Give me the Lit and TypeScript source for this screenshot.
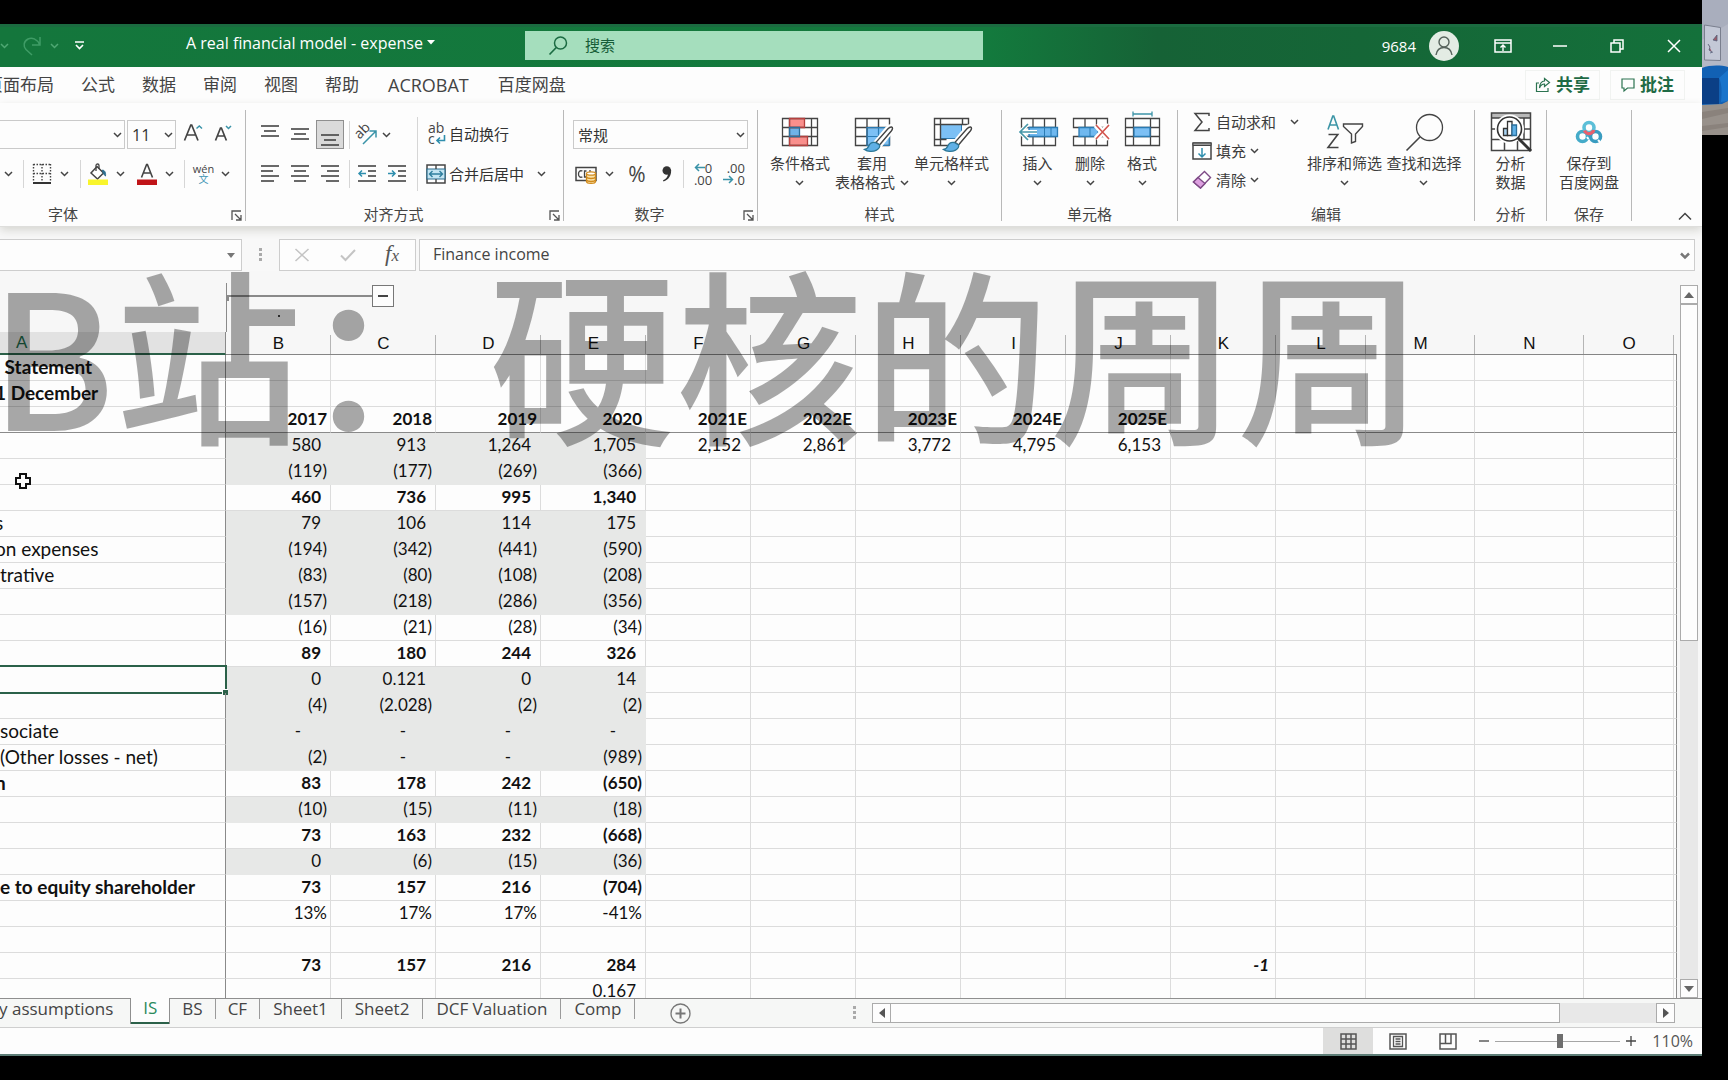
import { LitElement, html, svg, css, nothing, TemplateResult, SVGTemplateResult } from "lit";
import { customElement, state } from "lit/decorators.js";
import { classMap } from "lit/directives/class-map.js";

type Row = { label?: string; cut?: boolean; bold?: boolean; fill?: boolean; rule?: boolean; cells?: string[] };

const COLUMNS = ["A", "B", "C", "D", "E", "F", "G", "H", "I", "J", "K", "L", "M", "N", "O"];

const ROWS: Row[] = [
  { label: " Statement", bold: true },
  { label: "1 December", cut: true, bold: true },
  { bold: true, rule: true, cells: ["2017", "2018", "2019", "2020", "2021E", "2022E", "2023E", "2024E", "2025E"] },
  { fill: true, cells: ["580", "913", "1,264", "1,705", "2,152", "2,861", "3,772", "4,795", "6,153"] },
  { fill: true, cells: ["(119)", "(177)", "(269)", "(366)"] },
  { bold: true, cells: ["460", "736", "995", "1,340"] },
  { label: "s", cut: true, fill: true, cells: ["79", "106", "114", "175"] },
  { label: "on expenses", cut: true, fill: true, cells: ["(194)", "(342)", "(441)", "(590)"] },
  { label: "trative", fill: true, cells: ["(83)", "(80)", "(108)", "(208)"] },
  { fill: true, cells: ["(157)", "(218)", "(286)", "(356)"] },
  { cells: ["(16)", "(21)", "(28)", "(34)"] },
  { bold: true, cells: ["89", "180", "244", "326"] },
  { fill: true, cells: ["0", "0.121", "0", "14"] },
  { fill: true, cells: ["(4)", "(2.028)", "(2)", "(2)"] },
  { label: "sociate", fill: true, cells: ["-", "-", "-", "-"] },
  { label: "(Other losses - net)", fill: true, cells: ["(2)", "-", "-", "(989)"] },
  { label: "n", cut: true, bold: true, cells: ["83", "178", "242", "(650)"] },
  { fill: true, cells: ["(10)", "(15)", "(11)", "(18)"] },
  { bold: true, cells: ["73", "163", "232", "(668)"] },
  { fill: true, cells: ["0", "(6)", "(15)", "(36)"] },
  { label: "e to equity shareholder", bold: true, cells: ["73", "157", "216", "(704)"] },
  { cells: ["13%", "17%", "17%", "-41%"] },
  {},
  { bold: true, cells: ["73", "157", "216", "284", "", "", "", "", "", "-1"] },
  { cells: ["", "", "", "0.167"] },
];

const SELECTED_ROW = 12;

const icon = (w: number, h: number, body: SVGTemplateResult) =>
  html`<svg class="ic" width=${w} height=${h} viewBox="0 0 ${w} ${h}" fill="none" aria-hidden="true">${body}</svg>`;

const chev = () => icon(9, 6, svg`<path d="M1 1l3.5 3.5L8 1" stroke="#444" stroke-width="1.5"/>`);

const lines = (rows: [number, number, number][]) =>
  svg`${rows.map(([x1, x2, y]) => svg`<path d="M${x1} ${y}H${x2}" stroke="#444" stroke-width="1.6"/>`)}`;

const brush = svg`
  <path d="M41 16c2 0 2.500 2 1 4.500L30 36l-4.500-3.500L37 18.500c1.400-1.600 2.700-2.500 4-2.500z" fill="#fff" stroke="#fff" stroke-width="4"/>
  <path d="M41.500 17c1.500.3 1.300 2-.2 4L29.500 35l-3.500-2.700L38 18.800c1.200-1.300 2.400-2 3.500-1.800z" fill="#fff" stroke="#444" stroke-width="1.400"/>
  <path d="M25.500 32.500c-3-.6-5.600.6-6.600 3.200-.7 2-2.100 3.300-4.400 3.800 3 2.200 8.500 2.600 12 .6 2.400-1.400 3.600-3.500 3-5.100z" fill="#5fb0e6" stroke="#2c7796" stroke-width="1.300"/>`;

const ICONS = {
  conditional: svg`
    <path d="M4.500 8.500h35v27h-35z" fill="#fff"/>
    <path d="M11.500 8.500h15v9h-15zM11.500 26.500h18v9h-18z" fill="#f98f8c"/>
    <path d="M11.500 17.500h10v9h-10z" fill="#6fb3e8"/>
    <path d="M4.500 8.500h35v27h-35zM4.500 17.500h35M4.500 26.500h35M11.500 8.500v27M33.500 8.500v27" stroke="#444" stroke-width="1.300"/>
    <path d="M11.500 8.500h15v9h-15zM11.500 26.500h18v9h-18z" stroke="#b5403e" stroke-width="1.300"/>
    <path d="M11.500 17.500h10v9h-10z" stroke="#2b6f9c" stroke-width="1.300"/>`,
  tableFormat: svg`
    <path d="M5.500 8.500h34v27h-34z" fill="#fff"/>
    <path d="M17 17.500h22.500v18H17z" fill="#7cc0f5"/>
    <path d="M39.500 35.500h-34v-27h34v27M5.500 17.500h34M5.500 26.500H17M17 8.500v27M28.500 8.500v9" stroke="#444" stroke-width="1.400"/>
    <path d="M17 26.500h22.500M28.500 17.500v18M17 17.500h22.500v18H17z" stroke="#2b7bb3" stroke-width="1.200"/>
    ${brush}`,
  cellStyle: svg`
    <path d="M5.500 8.500h34v27h-34z" fill="#fff"/>
    <path d="M11.500 14.500h21v14h-21z" fill="#7cc0f5" stroke="#2b7bb3"/>
    <path d="M39.500 16V8.500h-34v27H20M11.500 8.500v27M5.500 14.500h34M5.500 29.500h12M33.500 8.500v6" stroke="#444" stroke-width="1.400"/>
    ${brush}`,
  insert: svg`
    <path d="M5.500 8.500h34v9h-34zM5.500 26.500h34v9h-34zM17 8.500v9M28.500 8.500v9M17 26.500v9M28.500 26.500v9M5.500 17.500v9" fill="#fff" stroke="#444" stroke-width="1.300"/>
    <path d="M13 17.500h28.500v9H13z" fill="#6fb8ef" stroke="#2b7bb3" stroke-width="1.300"/>
    <path d="M28.500 17.500v9M35 17.500v9" stroke="#2b7bb3"/>
    <path d="M21 22H4M12 14l-8 8 8 8" stroke="#fff" stroke-width="4"/>
    <path d="M21 22H4M12 14l-8 8 8 8" stroke="#4797a8" stroke-width="1.700"/>`,
  remove: svg`
    <path d="M5.500 8.500h34v9h-34zM5.500 26.500h34v9h-34zM17 8.500v9M28.500 8.500v9M17 26.500v9M28.500 26.500v9" fill="#fff" stroke="#444" stroke-width="1.300"/>
    <path d="M11 17.500h19v9H11z" fill="#6fb8ef" stroke="#2b7bb3" stroke-width="1.300"/>
    <path d="M22 17.500v9" stroke="#2b7bb3"/>
    <path d="M28 15l13 14M41 15L28 29" stroke="#fff" stroke-width="6"/>
    <path d="M28 15l13 14M41 15L28 29" stroke="#d2544d" stroke-width="1.600"/>`,
  format: svg`
    <path d="M5.500 8.500h34v27h-34zM5.500 17.500h34M5.500 26.500h34M13.500 8.500v27M30.500 8.500v27" fill="#fff" stroke="#444" stroke-width="1.300"/>
    <path d="M14 17.500h16v9H14z" fill="#7cc0f5" stroke="#2b7bb3" stroke-width="1.300"/>
    <path d="M13 4h19M13 1.500v5M32 1.500v5" stroke="#3d94a8" stroke-width="1.300"/>`,
  sort: svg`
    <path d="M5 19.500L9.800 6h.9l4.800 13.500M6.800 15h7" stroke="#3c95a6" stroke-width="1.600"/>
    <path d="M5.500 24.500h9.300L5 37.500h10.500" stroke="#444" stroke-width="1.600"/>
    <path d="M20.500 14h19v2.500L32.500 24v7.500l-4 1.500v-9L20.500 16.500z" stroke="#444" stroke-width="1.400"/>`,
  find: svg`<circle cx="27.500" cy="17.500" r="13" stroke="#444" stroke-width="1.300"/><path d="M18 27L4.500 40.500" stroke="#444" stroke-width="1.600"/>`,
  analyze: svg`
    <path d="M2.500 3h39v37.500h-39z" fill="#fff"/><path d="M2.500 3h39v5h-39z" fill="#b9b9b9"/>
    <path d="M2.500 3h39v37.500h-39zM2.500 8h39M2.500 19h39M2.500 29.500h39M15.500 29v11.500M28.500 29v11.500M35 8v21" stroke="#444" stroke-width="1.500"/>
    <circle cx="20.500" cy="19" r="13" fill="#fff" stroke="#fff" stroke-width="3"/>
    <circle cx="20.500" cy="19" r="12" fill="#fff" stroke="#333" stroke-width="1.600"/>
    <path d="M14.500 18.500h4v7h-4z" fill="#a8d3f2" stroke="#333" stroke-width="1.300"/>
    <path d="M18.500 11.500h4.500v14h-4.500z" fill="#fff" stroke="#333" stroke-width="1.300"/>
    <path d="M23 15h4.500v10.500H23z" fill="#5fb0e6" stroke="#2b6f9c" stroke-width="1.300"/>
    <path d="M29 28l13 13" stroke="#333" stroke-width="3"/>`,
  cloud: svg`
    <circle cx="15.500" cy="26.500" r="5" stroke="#45abc9" stroke-width="3.600"/>
    <circle cx="28.500" cy="26.500" r="5" stroke="#3a9cc0" stroke-width="3.600"/>
    <circle cx="22" cy="17.500" r="5" stroke="#5cbfd8" stroke-width="3.600"/>
    <path d="M17.500 20.500c1 2.700 4 3.700 6.300 2.700 1.700-.7 2.700-1.600 3-3.200" stroke="#e8606c" stroke-width="3.400"/>
    <path d="M20 27l1.500 2M31 30l2 2" stroke="#fff" stroke-width="2"/>`,
};

@customElement("app-root")
export class AppRoot extends LitElement {
  @state() private sheet = "IS";

  private big(body: SVGTemplateResult, first: string, second?: string, drop = true): TemplateResult {
    return html`<button class="big">
      ${icon(44, 44, body)}
      <span>${first}</span>
      <span class="second">${second ?? nothing}${drop ? chev() : nothing}</span>
    </button>`;
  }

  private caption(text: string, launcher = false) {
    return html`<div class="caption">
      <span>${text}</span>
      ${launcher
        ? html`<button class="launch" aria-label=${text}>
            ${icon(11, 11, svg`<path d="M1 10V1h9M4 4l5.500 5.500M10 5v5H5" stroke="#555" stroke-width="1.300"/>`)}
          </button>`
        : nothing}
    </div>`;
  }

  private titleBar() {
    return html`<header class="title-bar">
      <div class="title-left">
        <button aria-label="撤消选项">${icon(9, 6, svg`<path d="M1 1l3.500 3.500L8 1" stroke="#4fa873" stroke-width="1.500"/>`)}</button>
        <button class="redo" aria-label="恢复">
          ${icon(20, 20, svg`<path d="M18 1v8h-8M17.500 8.500C15 3 10 1 6 3 1.500 5.500 1 10 4 13.500L10 19" stroke="#3f9c66" stroke-width="1.500"/>`)}
        </button>
        <button aria-label="恢复选项">${icon(9, 6, svg`<path d="M1 1l3.500 3.500L8 1" stroke="#4fa873" stroke-width="1.500"/>`)}</button>
        <button class="customize" aria-label="自定义">
          ${icon(9, 9, svg`<path d="M0 1h9" stroke="#fff" stroke-width="1.500"/><path d="M1 4l3.500 3.500L8 4" stroke="#fff" stroke-width="1.600"/>`)}
        </button>
        <button class="file-name">A real financial model - expense ${icon(8, 5, svg`<path d="M0 0h8L4 4.500z" fill="#fff"/>`)}</button>
      </div>
      <label class="search">
        ${icon(20, 20, svg`<circle cx="12.500" cy="7" r="6" stroke="#1b6b42" stroke-width="1.500"/><path d="M8.300 11.500L1.500 18.500" stroke="#1b6b42" stroke-width="1.700"/>`)}
        <input type="text" placeholder="搜索" aria-label="搜索" />
      </label>
      <div class="title-right">
        <span>9684</span>
        <button class="avatar" aria-label="9684">
          ${icon(30, 30, svg`<circle cx="15" cy="15" r="15" fill="#e3ece4"/><circle cx="15" cy="11" r="5" stroke="#55625b" stroke-width="1.400"/><path d="M7 24c.8-5 4-7.500 8-7.500s7.200 2.500 8 7.500" stroke="#55625b" stroke-width="1.400"/>`)}
        </button>
        <button class="win" aria-label="功能区显示选项">
          ${icon(18, 14, svg`<path d="M1 1h16v12H1zM1 4h16" stroke="#fff" stroke-width="1.500"/><path d="M9 12V6M6.500 8.500L9 6l2.500 2.500" stroke="#fff" stroke-width="1.400"/>`)}
        </button>
        <button class="win" aria-label="最小化">${icon(14, 2, svg`<path d="M0 1h14" stroke="#fff" stroke-width="1.500"/>`)}</button>
        <button class="win" aria-label="还原">
          ${icon(14, 14, svg`<path d="M1 4h9v9H1zM4 4V1h9v9h-3" stroke="#fff" stroke-width="1.500"/>`)}
        </button>
        <button class="win" aria-label="关闭">${icon(14, 14, svg`<path d="M1 1l12 12M13 1L1 13" stroke="#fff" stroke-width="1.500"/>`)}</button>
      </div>
    </header>`;
  }

  private tabs() {
    const names = ["页面布局", "公式", "数据", "审阅", "视图", "帮助", "ACROBAT", "百度网盘"];
    return html`<nav class="tabs">
      ${names.map((n) => html`<button class=${classMap({ latin: /^[A-Z]+$/.test(n) })}>${n}</button>`)}
      <div class="tab-actions">
        <button>
          ${icon(16, 16, svg`<path d="M4 6H1.500v8.500H13V11" stroke="#2b7350" stroke-width="1.200"/><path d="M9.500 1.500l5 4-5 4V7C7 7 5.500 8.500 4.500 11c0-4 2-7 5-7z" stroke="#2b7350" stroke-width="1.200"/>`)}
          共享
        </button>
        <button>${icon(14, 14, svg`<path d="M1 1h12v9H6.500L3 13v-3H1z" stroke="#2b7350" stroke-width="1.200"/>`)}批注</button>
      </div>
    </nav>`;
  }

  private fontGroup() {
    return html`<section class="group font-group">
      <div class="row font-top">
        <label class="combo face"><select aria-label="字体"><option></option></select>${chev()}</label>
        <label class="combo size"><select aria-label="字号"><option>11</option></select>${chev()}</label>
        <button aria-label="增大字号">
          ${icon(20, 20, svg`<path d="M1.500 17.500L7.800 2h.9L15 17.500M3.800 12h9" stroke="#444" stroke-width="1.700"/><path d="M13.500 5.500L16.300 3 19 5.500" stroke="#3a93a8" stroke-width="1.500"/>`)}
        </button>
        <button aria-label="减小字号">
          ${icon(20, 20, svg`<path d="M2.500 17.500L7.500 5h.9l5 12.500M4.500 13h7" stroke="#444" stroke-width="1.700"/><path d="M13 3l2.500 2.500L18 3" stroke="#3a93a8" stroke-width="1.500"/>`)}
        </button>
      </div>
      <div class="row font-bottom">
        <button aria-label="下划线选项">${chev()}</button>
        <i class="bar"></i>
        <button aria-label="边框">
          ${icon(20, 22, svg`<path d="M1.500 1.500h17M1.500 10.500h17M1.500 1v18M10 1v18M18.500 1v18" stroke="#444" stroke-width="1.400" stroke-dasharray="1.500 1.500"/><path d="M1 20h18" stroke="#333" stroke-width="2"/>`)}
        </button>
        <button aria-label="边框选项">${chev()}</button>
        <i class="bar"></i>
        <button aria-label="填充颜色">
          ${icon(22, 22, svg`<path d="M10 3.500l6.500 6.500-6 6L4 10z" fill="#fff" stroke="#444" stroke-width="1.500"/><path d="M9 8V2.500c0-2 3-2 3 0V6" stroke="#444" stroke-width="1.300"/><path d="M15.500 7c2 .5 3.500 2 3 6-1.500-1-2-2.500-2.500-3.500z" fill="#2d6f8f" stroke="#2d6f8f"/><path d="M1 16.500h20v5.500H1z" fill="#f9f52c"/>`)}
        </button>
        <button aria-label="填充颜色选项">${chev()}</button>
        <button aria-label="字体颜色">
          ${icon(22, 22, svg`<path d="M5.500 14.500L10.600 1.500h.8l5.100 13M7.300 10h7.400" stroke="#444" stroke-width="1.600"/><path d="M1 16.500h20v5.500H1z" fill="#c01418"/>`)}
        </button>
        <button aria-label="字体颜色选项">${chev()}</button>
        <i class="bar"></i>
        <button class="pinyin"><span>wén</span><span class="han">文</span></button>
        <button aria-label="拼音选项">${chev()}</button>
      </div>
      ${this.caption("字体", true)}
    </section>`;
  }

  private alignGroup() {
    return html`<section class="group align-group">
      <div class="align-split">
        <div class="align-left">
          <div class="row align-row">
            <i></i>
            <button aria-label="顶端对齐">${icon(18, 24, lines([[0, 18, 3], [3, 15, 8], [0, 18, 13]]))}</button>
            <button aria-label="垂直居中">${icon(18, 24, lines([[0, 18, 6], [3, 15, 11], [0, 18, 16]]))}</button>
            <button class="pressed" aria-label="底端对齐">${icon(18, 24, lines([[0, 18, 12], [3, 15, 17], [0, 18, 22]]))}</button>
            <i class="bar"></i>
            <button aria-label="方向">
              <svg class="ic" width="22" height="22" viewBox="0 0 22 22" fill="none" aria-hidden="true">
                <text x="2" y="14" transform="rotate(-45 5 13)" font-size="14" font-family="Open Sans, sans-serif" fill="#444">ab</text>
                <path d="M7 20L20 7M13.500 7H20v6.500" stroke="#3a93a8" stroke-width="1.500" />
              </svg>
            </button>
            <button aria-label="方向选项">${chev()}</button>
          </div>
          <div class="row align-row">
            <i></i>
            <button aria-label="左对齐">${icon(18, 18, lines([[0, 18, 1], [0, 12, 6], [0, 18, 11], [0, 13, 16]]))}</button>
            <button aria-label="居中">${icon(18, 18, lines([[0, 18, 1], [3, 15, 6], [0, 18, 11], [3, 15, 16]]))}</button>
            <button aria-label="右对齐">${icon(18, 18, lines([[0, 18, 1], [6, 18, 6], [0, 18, 11], [5, 18, 16]]))}</button>
            <i class="bar"></i>
            <button aria-label="减少缩进量">
              ${icon(18, 18, svg`${lines([[0, 18, 1], [10, 18, 6], [10, 18, 11], [0, 18, 16]])}<path d="M8 8.500H1M4 5.500l-3 3 3 3" stroke="#2f8fae" stroke-width="1.500"/>`)}
            </button>
            <button class="indent" aria-label="增加缩进量">
              ${icon(18, 18, svg`${lines([[0, 18, 1], [10, 18, 6], [10, 18, 11], [0, 18, 16]])}<path d="M0 8.500h7M4 5.500l3 3-3 3" stroke="#2f8fae" stroke-width="1.500"/>`)}
            </button>
          </div>
        </div>
        <div class="align-right">
          <button class="wide">
            <svg class="ic" width="20" height="24" viewBox="0 0 20 24" fill="none" aria-hidden="true">
              <text x="2" y="11" font-size="14" font-family="Open Sans, sans-serif" fill="#444">ab</text>
              <text x="2" y="22" font-size="14" font-family="Open Sans, sans-serif" fill="#444">c</text>
              <path d="M18.500 13v5.500H11M14 15.500l-3 3 3 3" stroke="#2f8fae" stroke-width="1.600" />
            </svg>
            自动换行
          </button>
          <button class="wide">
            ${icon(20, 20, svg`<path d="M1 1h18v18H1z" fill="#fff" stroke="#444" stroke-width="1.500"/><path d="M1 5h18v10H1z" fill="#c4e5f2" stroke="#2d6f8f" stroke-width="1.200"/><path d="M10 1v4M10 15v4" stroke="#444" stroke-width="1.400"/><path d="M3.500 10h13M6.500 7l-3 3 3 3M13.500 7l3 3-3 3" stroke="#2f7f9e" stroke-width="1.400"/>`)}
            合并后居中 <span class="far">${chev()}</span>
          </button>
        </div>
      </div>
      ${this.caption("对齐方式", true)}
    </section>`;
  }

  private numberGroup() {
    return html`<section class="group number-group">
      <div class="row number-top">
        <label class="combo"><select aria-label="数字格式"><option>常规</option></select>${chev()}</label>
      </div>
      <div class="row number-bottom">
        <i></i>
        <button aria-label="会计数字格式">
          ${icon(22, 20, svg`<path d="M1 3.500h20v13H1z" stroke="#444" stroke-width="1.500"/><path d="M7.500 7C4.500 6 3.500 8 3.500 10s1 4 4 3M11.500 7h-2v6h2M15 6v5" stroke="#444" stroke-width="1.300"/><path d="M11.500 9.500v8c0 2.500 9 2.500 9 0v-8" fill="#fbe3a8" stroke="#d08a1c" stroke-width="1.300"/><ellipse cx="16" cy="9.500" rx="4.500" ry="1.700" fill="#fff" stroke="#d08a1c" stroke-width="1.300"/><path d="M11.500 13c1 2 8 2 9 0M11.500 16c1 2 8 2 9 0" stroke="#d08a1c" stroke-width="1.300"/>`)}
        </button>
        <button aria-label="会计格式选项">${chev()}</button>
        <button class="percent">%</button>
        <button aria-label="千位分隔样式">${icon(10, 18, svg`<circle cx="4.800" cy="5.500" r="4.300" fill="#333"/><path d="M9.100 5.500c.3 5-2.600 9.500-7.600 11l-.5-1.200c3-1.300 4.800-3.500 5-6.300z" fill="#333"/>`)}</button>
        <i class="bar"></i>
        <button class="decimals" aria-label="增加小数位数">
          <span>${icon(11, 9, svg`<path d="M11 4.500H1.500M5 1L1.500 4.500 5 8" stroke="#3a93a8" stroke-width="1.500"/>`)}0</span><span>.00</span>
        </button>
        <button class="decimals" aria-label="减少小数位数">
          <span>.00</span><span>${icon(11, 9, svg`<path d="M0 4.500h9.500M6 1l3.500 3.500L6 8" stroke="#3a93a8" stroke-width="1.500"/>`)}.0</span>
        </button>
      </div>
      ${this.caption("数字", true)}
    </section>`;
  }

  private ribbon() {
    return html`<div class="ribbon">
      ${this.fontGroup()} ${this.alignGroup()} ${this.numberGroup()}
      <section class="group">
        <div class="bigs style-bigs">
          ${this.big(ICONS.conditional, "条件格式")} ${this.big(ICONS.tableFormat, "套用", "表格格式")} ${this.big(ICONS.cellStyle, "单元格样式")}
        </div>
        ${this.caption("样式")}
      </section>
      <section class="group">
        <div class="bigs cell-bigs">${this.big(ICONS.insert, "插入")} ${this.big(ICONS.remove, "删除")} ${this.big(ICONS.format, "格式")}</div>
        ${this.caption("单元格")}
      </section>
      <section class="group">
        <div class="bigs edit-bigs">
          <div class="edit-list">
            <button>
              ${icon(20, 20, svg`<path d="M17 4V1.500H3L10 10l-7 8.500h14V16" stroke="#444" stroke-width="1.500"/>`)}自动求和 <span class="far">${chev()}</span>
            </button>
            <button>
              ${icon(20, 20, svg`<path d="M1 2h18v16H1z" fill="#fff" stroke="#444" stroke-width="1.500"/><path d="M1 2h18v2.500H1z" fill="#999" stroke="#444"/><path d="M10 7v9M6.500 12.500L10 16l3.500-3.500" stroke="#2f8fae" stroke-width="1.500"/>`)}填充 ${chev()}
            </button>
            <button>
              ${icon(20, 20, svg`<path d="M12.500 1.500l6 6-10 10.500-7-6z" fill="#fff" stroke="#7e4a86" stroke-width="1.400"/><path d="M6 7.500l7 6-4.500 4.500-7-6z" fill="#dda0e0" stroke="#7e4a86" stroke-width="1.400"/>`)}清除 ${chev()}
            </button>
          </div>
          ${this.big(ICONS.sort, "排序和筛选")} ${this.big(ICONS.find, "查找和选择")}
        </div>
        ${this.caption("编辑")}
      </section>
      <section class="group">
        <div class="bigs">${this.big(ICONS.analyze, "分析", "数据", false)}</div>
        ${this.caption("分析")}
      </section>
      <section class="group">
        <div class="bigs">${this.big(ICONS.cloud, "保存到", "百度网盘", false)}</div>
        ${this.caption("保存")}
      </section>
      <button class="collapse" aria-label="折叠功能区">${icon(14, 9, svg`<path d="M1 7.500L7 1.500l6 6" stroke="#444" stroke-width="1.500"/>`)}</button>
    </div>`;
  }

  private formulaBar() {
    return html`<div class="formula-bar">
      <label class="box name-box"><input type="text" aria-label="名称框" />${icon(8, 5, svg`<path d="M0 0h8L4 5z" fill="#777"/>`)}</label>
      <span class="grip">${icon(3, 14, svg`<path d="M0 0h3v3H0zM0 5h3v3H0zM0 10h3v3H0z" fill="#aaa"/>`)}</span>
      <div class="box fx-box">
        <button aria-label="取消">${icon(16, 14, svg`<path d="M1.500 1l13 12M14.500 1l-13 12" stroke="#c4c4c4" stroke-width="1.500"/>`)}</button>
        <button aria-label="输入">${icon(16, 12, svg`<path d="M1 6.500L5.500 11 15 1" stroke="#c4c4c4" stroke-width="2"/>`)}</button>
        <button class="fx"><em>f</em><em class="x">x</em></button>
      </div>
      <label class="box formula">
        <input type="text" aria-label="编辑栏" .value=${"Finance income"} />
        ${icon(10, 7, svg`<path d="M1 1.500L5 5.500l4-4" stroke="#777" stroke-width="2.500"/>`)}
      </label>
    </div>`;
  }

  private cell(row: Row, text: string, col: number) {
    const classes = {
      plain: /^[\d,.]+$/.test(text) && !row.rule,
      dash: text === "-",
      filled: !!row.fill && col < 4,
      slanted: text === "-1",
    };
    return html`<td class=${classMap(classes)}>${text}</td>`;
  }

  private grid() {
    return html`<div class="workspace">
      <div class="pane">
        <div class="outline">
          <div class="level"><i class="reach"></i><button aria-label="折叠列">${icon(10, 2, svg`<path d="M0 1h10" stroke="#444" stroke-width="2"/>`)}</button></div>
          <i class="dot"></i>
        </div>
        <table>
          <colgroup>
            <col class="c-a" />
            ${COLUMNS.slice(1).map((c) => html`<col class=${c === "L" || c === "O" ? "c-narrow" : c === "M" || c === "N" ? "c-wide" : "c-std"} />`)}
            <col />
          </colgroup>
          <thead>
            <tr>${COLUMNS.map((c) => html`<th scope="col">${c}</th>`)}<th class="end"></th></tr>
          </thead>
          <tbody>
            ${ROWS.map(
              (row, r) => html`<tr class=${classMap({ bold: !!row.bold, rule: !!row.rule })}>
                <th scope="row" class=${classMap({ selected: r === SELECTED_ROW, cut: !!row.cut })}>${row.label ?? nothing}</th>
                ${COLUMNS.slice(1).map((_, c) => this.cell(row, row.cells?.[c] ?? "", c))}
                <td class="end"></td>
              </tr>`
            )}
          </tbody>
        </table>
      </div>
      <div class="v-scroll">
        <button aria-label="向上">${icon(10, 6, svg`<path d="M0 6h10L5 0z" fill="#666"/>`)}</button>
        <i class="v-thumb"></i><i class="v-track"></i>
        <button aria-label="向下">${icon(10, 6, svg`<path d="M0 0h10L5 6z" fill="#666"/>`)}</button>
      </div>
    </div>`;
  }

  private sheetBar() {
    const names = ["y assumptions", "IS", "BS", "CF", "Sheet1", "Sheet2", "DCF Valuation", "Comp"];
    return html`<div class="sheet-bar">
      ${names.map(
        (n) => html`<button class=${classMap({ sheet: true, short: n.length < 3, active: n === this.sheet })} @click=${() => (this.sheet = n)}><span>${n}</span></button>`
      )}
      <button class="add" aria-label="新工作表">
        ${icon(21, 21, svg`<circle cx="10.500" cy="10.500" r="9.500" stroke="#777" stroke-width="1.300"/><path d="M10.500 5.500v10M5.500 10.500h10" stroke="#777" stroke-width="2"/>`)}
      </button>
      <span class="grip end-grip">${icon(3, 14, svg`<path d="M0 0h3v3H0zM0 5h3v3H0zM0 10h3v3H0z" fill="#aaa"/>`)}</span>
      <div class="h-scroll">
        <button aria-label="向左">${icon(6, 10, svg`<path d="M6 0v10L0 5z" fill="#555"/>`)}</button>
        <i class="h-thumb"></i><i class="h-track"></i>
        <button aria-label="向右">${icon(6, 10, svg`<path d="M0 0v10L6 5z" fill="#555"/>`)}</button>
      </div>
    </div>`;
  }

  private statusBar() {
    return html`<footer class="status">
      <button class="view on" aria-label="普通">${icon(17, 17, svg`<path d="M1 1h15v15H1zM1 6h15M1 11h15M6 1v15M11 1v15" stroke="#555" stroke-width="1.500"/>`)}</button>
      <button class="view" aria-label="页面布局视图">${icon(18, 17, svg`<path d="M1 1h16v15H1z" stroke="#555" stroke-width="1.500"/><path d="M4.500 3.500h9v10h-9zM6.500 6h5M6.500 8.500h5M6.500 11h5" stroke="#555" stroke-width="1.300"/>`)}</button>
      <button class="view" aria-label="分页预览">${icon(18, 17, svg`<path d="M1 1h16v15H1zM1 10.500h11V1M6.500 1v9.500" stroke="#555" stroke-width="1.500"/>`)}</button>
      <button class="step" aria-label="缩小">${icon(10, 10, svg`<path d="M0 5h10" stroke="#444" stroke-width="1.300"/>`)}</button>
      <input type="range" min="0" max="100" value="52" aria-label="缩放" />
      <button class="step" aria-label="放大">${icon(10, 10, svg`<path d="M0 5h10M5 0v10" stroke="#444" stroke-width="1.300"/>`)}</button>
      <button class="zoom">110%</button>
    </footer>`;
  }

  render() {
    return html`<main class="screen">
      <div class="app">
        ${this.titleBar()} ${this.tabs()} ${this.ribbon()} ${this.formulaBar()} ${this.grid()} ${this.sheetBar()} ${this.statusBar()}
      </div>
      <aside class="camera">
        <svg width="26" height="135" viewBox="0 0 26 135" aria-hidden="true">
          <path d="M0 0h26v135H0z" fill="#b4b8c6" />
          <path d="M0 0h26v24L0 40z" fill="#a9aebd" />
          <path d="M2.500 25l16 2.500v33L2.500 60z" fill="#c3c8d6" stroke="#7a7f8e" />
          <path d="M11 40l4-5v6zM6 44l2 3-1 3 3 2M8 53l3-1" fill="#9c5a68" stroke="#56607a" stroke-width=".8" />
          <path d="M0 68c8-3 18-3 26-1v36l-6 2H0z" fill="#1261b4" />
          <path d="M0 78h17v26H0z" fill="#0b3f86" />
          <path d="M17 78c3 6 3 14 2 24l7-1V70z" fill="#1a74cb" />
          <path d="M0 105l20-1 6-3v34H0z" fill="#98918b" />
          <path d="M0 112l26-4v5L0 119zM0 126l26-3v4L0 131z" fill="#8a827c" />
        </svg>
      </aside>
      <div class="watermark">B站：硬核的周周</div>
      <svg class="pointer" width="18" height="18" viewBox="0 0 18 18" aria-hidden="true">
        <path d="M6 2h6v4h4v6h-4v4H6v-4H2V6h4z" fill="#fff" stroke="#111" stroke-width="2" />
      </svg>
    </main>`;
  }

  static styles = css`
    :host { display: block; }
    * { box-sizing: border-box; }
    button, input, select { font: inherit; color: inherit; border: 0; background: none; padding: 0; margin: 0; outline: none; border-radius: 0; }
    button { display: flex; align-items: center; justify-content: center; white-space: nowrap; }
    .ic { display: block; flex: none; overflow: visible; }
    .screen {
      position: relative; display: flex; height: 100vh; min-height: 720px; padding: 24px 0; overflow: hidden; background: #000;
      font: 15px/20px "Open Sans", "Noto Sans CJK SC", sans-serif; color: #444;
    }
    .app { flex: 1; min-width: 0; display: flex; flex-direction: column; background: #fdfdfd; border-bottom: 2px solid #5d7d76; overflow: hidden; }
    .camera { flex: none; width: 26px; margin-top: -24px; }
    .camera svg { display: block; }

    .title-bar {
      flex: none; display: grid; grid-template-columns: 525px 458px 1fr; align-items: center; height: 43px; color: #fff;
      background: linear-gradient(90deg, #14763c 0, #137a3d 58%, #166236 68%, #156637 80%, #14713b 100%);
      box-shadow: inset 0 7px 0 -4px #1b6b40;
    }
    .title-left { display: flex; align-items: center; height: 43px; }
    .title-left .redo { margin: 0 8px 0 13px; }
    .title-left .customize { margin-left: 16px; }
    .file-name { margin: 0 0 6px 102px; gap: 4px; font-size: 16px; }
    .search { display: flex; align-items: center; height: 29px; padding-left: 23px; gap: 17px; background: #a5debd; }
    .search input { flex: 1; height: 22px; margin-bottom: 2px; color: #175c37; }
    .search input::placeholder { color: #175c37; opacity: 1; }
    .title-right { display: flex; align-items: center; justify-content: flex-end; }
    .avatar { margin: 0 15px 0 13px; }
    .win { width: 57px; height: 43px; }

    .tabs { flex: none; display: flex; align-items: center; height: 36px; gap: 27px; margin-left: -14px; font-size: 17px; }
    .tabs > button { flex: none; }
    .tabs .latin { padding: 0 2px; font-size: 18px; }
    .tab-actions { display: flex; gap: 10px; margin-left: auto; padding-right: 17px; color: #1f6b45; font-weight: 700; }
    .tab-actions button { width: 75px; height: 30px; gap: 5px; border: 1px solid #f1f3f1; }

    .ribbon {
      flex: none; display: grid; grid-template-columns: 246px 318px 194px 244px 176px 297px 72px 85px 1fr; height: 123px; padding: 7px 0 5px;
      position: relative; z-index: 1; box-shadow: 0 1px 0 #dededc, 0 4px 9px #d4d4cf;
    }
    .group { display: grid; grid-template-rows: 83px 28px; border-right: 1px solid #b9b9b9; min-width: 0; }
    .font-group, .number-group { grid-template-rows: 39px 49px 23px; }
    .font-top, .number-top { align-self: end; }
    .caption { display: flex; align-items: flex-end; line-height: 14px; }
    .caption span { flex: 1; text-align: center; }
    .font-group .caption span { padding-right: 97px; }
    .launch { width: 22px; height: 12px; justify-content: flex-start; padding-left: 8px; }
    .row { display: grid; align-items: center; justify-items: center; }
    .bar { width: 1px; height: 28px; background: #d6d6d6; }
    .combo { display: flex; align-items: center; width: 100%; height: 29px; padding: 0 2px 0 4px; border: 1px solid #cacaca; background: #fdfdfd; color: #333; }
    .combo select { flex: 1; min-width: 0; appearance: none; }
    .combo.face { border-left: 0; }
    .font-top { grid-template-columns: 125px 51px 33px 28px; }
    .font-top button { padding-bottom: 4px; }
    .font-top .size { width: 49px; justify-self: end; font-size: 16px; }
    .font-bottom { grid-template-columns: 17px 13px 23px 23px 8px 28px 16px 38px 7px 23px 15px 29px; }
    .pinyin { flex-direction: column; font-size: 11px; line-height: 11px; }
    .pinyin .han { color: #4496b4; font-size: 10px; }

    .align-split { display: flex; padding-top: 7px; }
    .align-left { width: 172px; height: 74px; border-right: 1px solid #d6d6d6; }
    .align-row { grid-template-columns: 9px 30px 30px 30px 8px 28px 10px 22px; height: 35px; }
    .align-row + .align-row { height: 43px; }
    .align-row .indent { grid-column: 7 / 9; }
    .pressed { width: 28px; height: 29px; background: #dadada; border: 1px solid #8f8f8f; }
    .align-right { padding-left: 8px; }
    .wide { gap: 3px; height: 35px; padding-bottom: 2px; color: #333; }
    .wide + .wide { height: 43px; padding-bottom: 0; }
    .far { margin-left: 10px; }

    .number-top { padding: 0 9px; }
    .number-bottom { grid-template-columns: 9px 26px 20px 36px 24px 8px 32px 30px; }
    .percent { font-size: 21px; }
    .decimals { flex-direction: column; align-items: flex-end; font-size: 13px; line-height: 12px; }
    .decimals span { display: flex; align-items: center; }

    .bigs { display: grid; align-items: start; justify-items: center; }
    .style-bigs { grid-template-columns: 84px 60px 99px; }
    .cell-bigs { grid-template-columns: 71px 34px 70px; }
    .edit-bigs { grid-template-columns: 129px 75px 84px; }
    .big { flex-direction: column; line-height: 19px; color: #3c3c3c; }
    .big .second { display: flex; align-items: center; gap: 5px; height: 19px; }
    .edit-list { justify-self: start; padding-left: 14px; margin-top: -3px; }
    .edit-list button { height: 29px; gap: 4px; color: #3c3c3c; }
    .collapse { align-self: end; justify-self: end; margin-right: 10px; }

    .formula-bar { flex: none; display: flex; height: 45px; padding: 13px 7px 0 0; background: #f8f8f8; }
    .box { display: flex; align-items: center; height: 32px; border: 1px solid #cdcdcd; background: #fdfdfd; }
    .name-box { width: 242px; border-left: 0; padding-right: 6px; }
    .name-box input { flex: 1; min-width: 0; }
    .grip { display: flex; align-items: center; justify-content: center; width: 37px; }
    .fx-box { width: 137px; margin-right: 3px; justify-content: space-between; padding: 0 16px 0 14px; }
    .fx { align-items: baseline; font: 23px/24px "Liberation Serif", serif; color: #555; }
    .fx .x { font-size: 17px; }
    .formula { flex: 1; padding: 0 4px 0 13px; }
    .formula input { flex: 1; height: 24px; margin-bottom: 2px; font-size: 16px; color: #444; }

    .workspace { flex: 1; min-height: 0; display: flex; overflow: hidden; background: #f7f7f7; }
    .pane { flex: 1; min-width: 0; overflow: hidden; }
    .outline { display: flex; height: 61px; }
    .outline::before { content: ""; width: 226px; border-right: 1px solid #8a8a8a; margin-top: 12px; }
    .level { display: flex; align-items: center; height: 22px; margin-top: 14px; }
    .reach { width: 145px; height: 6px; margin-top: 4px; border: solid #8a8a8a; border-width: 2px 0 0 2px; }
    .level button { width: 22px; height: 22px; border: 1px solid #777; background: #fdfdfd; }
    .dot { width: 2px; height: 2px; margin: 44px 0 0 -116px; background: #444; }

    table { width: 100%; table-layout: fixed; border-collapse: separate; border-spacing: 0; font: 17px/24px Lato, sans-serif; color: #111; }
    .c-a { width: 226px; }
    .c-std { width: 105px; }
    .c-narrow { width: 90px; }
    .c-wide { width: 109px; }
    thead th {
      height: 23px; padding: 2px 0 0; font: 17px/20px "Liberation Sans", sans-serif; border-bottom: 1px solid #858585;
      background: linear-gradient(#b5b5b5, #b5b5b5) right bottom / 1px 19px no-repeat;
    }
    thead th:first-child { padding: 1px 0 0 16px; text-align: left; color: #1d6b4a; background: #e2e2e2; border-right: 1px solid #8a8a8a; border-bottom: 2px solid #2b6149; }
    thead th.end { background: none; }
    tbody { background: #fdfdfd; }
    td, tbody th { height: 26px; padding: 0 3px 1px 0; white-space: pre; text-align: right; border: solid #dcdcdc; border-width: 0 1px 1px 0; }
    tbody th { position: relative; padding: 0 0 1px; font-size: 19px; font-weight: 400; text-align: left; border-right-color: #8a8a8a; }
    tbody .cut { text-indent: -5px; }
    .bold { font-weight: 700; }
    .bold th { font-weight: 700; }
    .plain { padding-right: 9px; }
    .dash { padding-right: 29px; }
    .slanted { padding-right: 6px; font-style: italic; }
    .filled { background: #e7e8e7; border-color: #e7e8e7; }
    .rule td, .rule th { border-bottom-color: #8a8a8a; }
    td.end { padding: 0; border-right-color: #8a8a8a; }
    .selected::before { content: ""; position: absolute; inset: -2px -2px -2px -3px; border: 2px solid #2b6149; }
    .selected::after { content: ""; position: absolute; right: -3px; bottom: -3px; width: 5px; height: 5px; background: #2b6149; border: solid #fdfdfd; border-width: 1px 0 0 1px; }

    .v-scroll { flex: none; display: flex; flex-direction: column; width: 25px; padding: 14px 4px 0 3px; }
    .v-scroll button { flex: none; height: 19px; border: 1px solid #ababab; background: #fdfdfd; }
    .v-thumb { flex: 336; border: 1px solid #ababab; background: #fdfdfd; }
    .v-track { flex: 340; background: #e8e8e8; }

    .sheet-bar { flex: none; display: flex; height: 30px; background: #f6f7f6; border-top: 1px solid #8f8f8f; border-bottom: 1px solid #cfcfcf; font-size: 17px; }
    .sheet { height: 25px; padding-bottom: 6px; color: #444; }
    .sheet span { padding: 0 13px; border-right: 1px solid #9a9a9a; }
    .sheet.short span { padding: 0 12px; }
    .sheet:first-child span { padding: 0 17px 0 0; border: 0; margin-left: -1px; }
    .active { height: 26px; margin-top: -1px; background: #fdfdfd; color: #2b8a5c; border: solid #8f8f8f; border-width: 0 1px; box-shadow: inset 0 -2px #2b6149; }
    .sheet.active span { border: 0; }
    .add { margin-left: 35px; height: 28px; }
    .end-grip { margin-left: auto; width: 14px; }
    .h-scroll { display: flex; width: 803px; height: 20px; margin: 4px 27px 0 11px; }
    .h-scroll button { width: 19px; border: 1px solid #ababab; background: #fdfdfd; }
    .h-thumb { flex: 669; border: 1px solid #ababab; border-left: 0; background: #fdfdfd; }
    .h-track { flex: 96; background: #e8e8e8; }

    .status { flex: none; display: flex; align-items: center; justify-content: flex-end; height: 26px; padding-right: 9px; color: #555; }
    .view { width: 50px; height: 26px; }
    .on { background: #dededd; }
    .step { width: 22px; height: 26px; }
    .status input { appearance: none; width: 125px; height: 14px; background: linear-gradient(#a5a5a5, #a5a5a5) center / 100% 1px no-repeat; }
    .status input::-webkit-slider-thumb { appearance: none; width: 6px; height: 14px; background: #6e6e6e; }
    .zoom { margin-left: 10px; font-size: 16px; }

    .watermark {
      position: absolute; left: -10px; top: 238px; white-space: nowrap; pointer-events: none; z-index: 2;
      font: 500 187px/224px "Noto Sans CJK SC", sans-serif; color: rgba(0, 0, 0, 0.34);
    }
    .pointer { position: absolute; left: 14px; top: 472px; z-index: 3; pointer-events: none; }
  `;
}
